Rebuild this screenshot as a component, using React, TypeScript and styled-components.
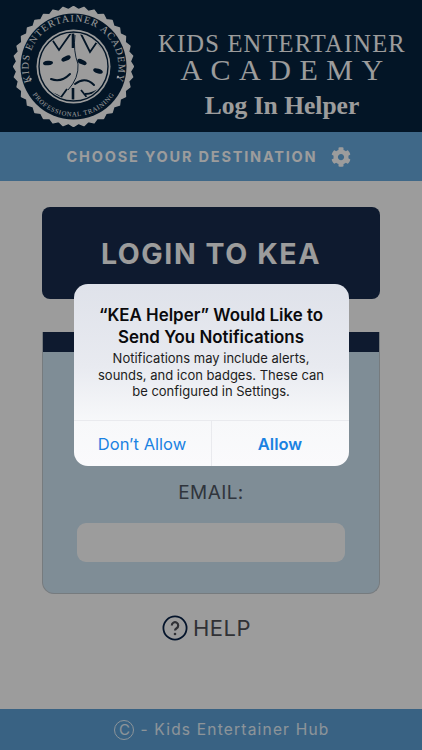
import React from "react"
import styled, { createGlobalStyle } from "styled-components"
import { FaCog } from "react-icons/fa"

const GlobalStyle = createGlobalStyle`
  html, body {
    margin: 0;
    padding: 0;
    background: #fff;
  }
  * {
    box-sizing: border-box;
  }
`

const Page = styled.div`
  position: relative;
  width: 422px;
  height: 750px;
  display: flex;
  flex-direction: column;
  overflow: hidden;
  background: #fff;
  font-family: Inter, "Liberation Sans", sans-serif;
`

const Header = styled.header`
  height: 132px;
  display: flex;
  align-items: center;
  background: #05233f;
  padding: 0 5px 0 13px;
  gap: 13px;
`

const Titles = styled.div`
  flex: 1;
  display: flex;
  flex-direction: column;
  align-items: center;
  color: #fff;
  font-family: "Liberation Serif", serif;
  margin-top: 20px;
`

const TitleTop = styled.div`
  font-size: 24.5px;
  line-height: 26px;
  letter-spacing: 1.2px;
  white-space: nowrap;
`

const TitleMid = styled.div`
  font-size: 30px;
  line-height: 26px;
  letter-spacing: 8.5px;
  margin-right: -8px;
  white-space: nowrap;
`

const TitleScript = styled.div`
  font-size: 25.5px;
  line-height: 32px;
  margin-top: 7px;
  font-weight: bold;
  white-space: nowrap;
`

const DestinationBar = styled.div`
  height: 49px;
  display: flex;
  align-items: center;
  justify-content: center;
  gap: 14px;
  padding-right: 4px;
  background: #67aadf;
  color: #fff;
  font-size: 14.5px;
  font-weight: 700;
  letter-spacing: 1.8px;
  svg {
    width: 20px;
    height: 20px;
  }
`

const Main = styled.main`
  flex: 1;
  display: flex;
  flex-direction: column;
  align-items: center;
  padding-top: 26px;
`

const LoginButton = styled.div`
  width: 338px;
  height: 92px;
  border-radius: 8px;
  display: flex;
  align-items: center;
  justify-content: center;
  background: #172c4d;
  color: #fff;
  font-size: 28.5px;
  font-weight: 700;
  letter-spacing: 1.6px;
`

const FormCard = styled.section`
  width: 338px;
  height: 262px;
  margin-top: 33px;
  display: flex;
  flex-direction: column;
  align-items: center;
  background: #d0e6f6;
  border: 1px solid #c2c9ce;
  border-top: none;
  border-radius: 0 0 12px 12px;
  overflow: hidden;
`

const CardTop = styled.div`
  width: 100%;
  height: 20px;
  background: #172c4d;
`

const EmailLabel = styled.label`
  margin-top: 130px;
  font-size: 19px;
  line-height: 22px;
  letter-spacing: 0.4px;
  color: #4f5864;
`

const EmailInput = styled.div`
  width: 268px;
  height: 39px;
  margin-top: 19px;
  border-radius: 9px;
  background: #fff;
`

const HelpRow = styled.div`
  display: flex;
  align-items: center;
  gap: 5px;
  margin-top: 21px;
  margin-right: 9px;
  font-size: 22px;
  line-height: 26px;
  letter-spacing: 0.5px;
  color: #4f5158;
  svg {
    width: 26px;
    height: 26px;
  }
`

const Footer = styled.footer`
  height: 41px;
  display: flex;
  align-items: center;
  justify-content: center;
  gap: 6px;
  padding-left: 22px;
  background: #5da1d7;
  color: #e6f2fb;
  font-size: 15.5px;
  letter-spacing: 1.2px;
`

const Copyright = styled.span`
  width: 20px;
  height: 20px;
  border: 1.3px solid #e6f2fb;
  border-radius: 50%;
  display: flex;
  align-items: center;
  justify-content: center;
  font-size: 15px;
  letter-spacing: 0;
`

const Overlay = styled.div`
  position: absolute;
  inset: 0;
  display: flex;
  align-items: center;
  justify-content: center;
  background: rgba(0, 0, 0, 0.39);
`

const Alert = styled.div`
  width: 275px;
  height: 182px;
  border-radius: 14px;
  overflow: hidden;
  display: flex;
  flex-direction: column;
  background: linear-gradient(#dfe2ea 0%, #e8eaf0 45%, #f7f8fa 75%, #fafafc 100%);
`

const AlertBody = styled.div`
  flex: 1;
  padding-top: 20px;
  text-align: center;
`

const AlertTitle = styled.div`
  font-size: 16.9px;
  line-height: 22px;
  font-weight: 600;
  color: #0a0a0c;
`

const AlertText = styled.div`
  font-size: 13px;
  line-height: 16.5px;
  margin-top: 2px;
  color: #1c1c20;
`

const AlertActions = styled.div`
  height: 46px;
  display: grid;
  grid-template-columns: 137px 1fr;
  border-top: 1px solid #e9eaee;
`

const AlertAction = styled.div<{ $primary?: boolean }>`
  display: flex;
  align-items: center;
  justify-content: center;
  color: #1a82e2;
  font-size: 16.5px;
  font-weight: ${(p) => (p.$primary ? 600 : 400)};
  & + & {
    border-left: 1px solid #e9eaee;
  }
`

const SEAL_FG = "#ffffff"
const SEAL_BG = "#05233f"

const scallopPath = () => {
  const teeth = 36
  const points: string[] = []
  for (let i = 0; i < teeth * 2; i++) {
    const r = i % 2 === 0 ? 60 : 57
    const a = (i / (teeth * 2)) * Math.PI * 2
    points.push(`${(60.5 + r * Math.cos(a)).toFixed(2)},${(60.5 + r * Math.sin(a)).toFixed(2)}`)
  }
  return points.join(" ")
}

const Seal = () => (
  <svg width="121" height="121" viewBox="0 0 121 121" style={{ flexShrink: 0 }}>
    <defs>
      <path id="sealTop" d="M 17 72 A 45 45 0 1 1 104 72" />
      <path id="sealBottom" d="M 17 84 A 49 49 0 0 0 104 84" />
      <clipPath id="globeClip">
        <circle cx="60.5" cy="60.5" r="33" />
      </clipPath>
    </defs>
    <polygon points={scallopPath()} fill={SEAL_FG} strokeLinejoin="round" stroke={SEAL_FG} strokeWidth="1.5" />
    <circle cx="60.5" cy="60.5" r="53" fill={SEAL_BG} />
    <text fontFamily="'Liberation Serif', serif" fontSize="10" letterSpacing="1.1" fill={SEAL_FG}>
      <textPath href="#sealTop" startOffset="50%" textAnchor="middle">KIDS ENTERTAINER ACADEMY</textPath>
    </text>
    <text fontFamily="'Liberation Serif', serif" fontSize="6.6" letterSpacing="0.7" fill={SEAL_FG}>
      <textPath href="#sealBottom" startOffset="50%" textAnchor="middle">PROFESSIONAL TRAINING</textPath>
    </text>
    <circle cx="17.5" cy="73" r="1.2" fill={SEAL_FG} />
    <circle cx="105" cy="71" r="1.2" fill={SEAL_FG} />

    <circle cx="60.5" cy="60.5" r="37" fill={SEAL_FG} />
    <circle cx="60.5" cy="60.5" r="34.5" fill="none" stroke={SEAL_BG} strokeWidth="1.4" />
    <g clipPath="url(#globeClip)" fill="none" stroke={SEAL_BG}>
      <path d="M 26 46 L 38 32 L 46 44 L 58 27" strokeWidth="1.8" />
      <path d="M 60 27 L 60 42" strokeWidth="2.6" />
      <path d="M 68 28 L 77 46 L 84 36 L 96 50" strokeWidth="1.8" />
      <path d="M 36 87 Q 46 88 52 96" strokeWidth="1.8" />
      <path d="M 54 83 L 46 94" strokeWidth="1.8" />
      <path d="M 60 82 L 60 94" strokeWidth="2.6" />
      <path d="M 68 84 L 76 94" strokeWidth="1.8" />
      <path d="M 72 88 Q 80 88 88 82" strokeWidth="1.8" />
      <path d="M 62 29 Q 60 45 65 58 Q 66 72 55 84" strokeWidth="0.9" />
    </g>
    <g fill={SEAL_BG}>
      <ellipse cx="35" cy="57" rx="5" ry="2.3" transform="rotate(-5 35 57)" />
      <ellipse cx="53" cy="52.5" rx="5" ry="2.3" transform="rotate(-25 53 52.5)" />
      <ellipse cx="69" cy="56" rx="5" ry="2.3" transform="rotate(25 69 56)" />
      <ellipse cx="85" cy="65" rx="5" ry="2.3" transform="rotate(18 85 65)" />
    </g>
    <path d="M 38 73 Q 48 77 57 68" fill="none" stroke={SEAL_BG} strokeWidth="2" strokeLinecap="round" />
    <path d="M 62 78 Q 72 70 81 79" fill="none" stroke={SEAL_BG} strokeWidth="2" strokeLinecap="round" />
  </svg>
)

const HelpIcon = () => (
  <svg viewBox="0 0 26 26" fill="none">
    <circle cx="13" cy="13" r="11.6" stroke="#082247" strokeWidth="1.8" />
    <path
      d="M 9.8 10.4 A 3.2 3.2 0 1 1 14.6 13.2 Q 13 14.2 13 15.6"
      stroke="#4f5158"
      strokeWidth="2.2"
    />
    <circle cx="13" cy="19" r="1.3" fill="#4f5158" />
  </svg>
)

export default function App() {
  return (
    <Page>
      <GlobalStyle />
      <Header>
        <Seal />
        <Titles>
          <TitleTop>KIDS ENTERTAINER</TitleTop>
          <TitleMid>ACADEMY</TitleMid>
          <TitleScript>Log In Helper</TitleScript>
        </Titles>
      </Header>
      <DestinationBar>
        CHOOSE YOUR DESTINATION
        <FaCog />
      </DestinationBar>
      <Main>
        <LoginButton>LOGIN TO KEA</LoginButton>
        <FormCard>
          <CardTop />
          <EmailLabel>EMAIL:</EmailLabel>
          <EmailInput />
        </FormCard>
        <HelpRow>
          <HelpIcon />
          HELP
        </HelpRow>
      </Main>
      <Footer>
        <Copyright>C</Copyright>
        - Kids Entertainer Hub
      </Footer>
      <Overlay>
        <Alert>
          <AlertBody>
            <AlertTitle>
              “KEA Helper” Would Like to
              <br />
              Send You Notifications
            </AlertTitle>
            <AlertText>
              Notifications may include alerts,
              <br />
              sounds, and icon badges. These can
              <br />
              be configured in Settings.
            </AlertText>
          </AlertBody>
          <AlertActions>
            <AlertAction>Don’t Allow</AlertAction>
            <AlertAction $primary>Allow</AlertAction>
          </AlertActions>
        </Alert>
      </Overlay>
    </Page>
  )
}
